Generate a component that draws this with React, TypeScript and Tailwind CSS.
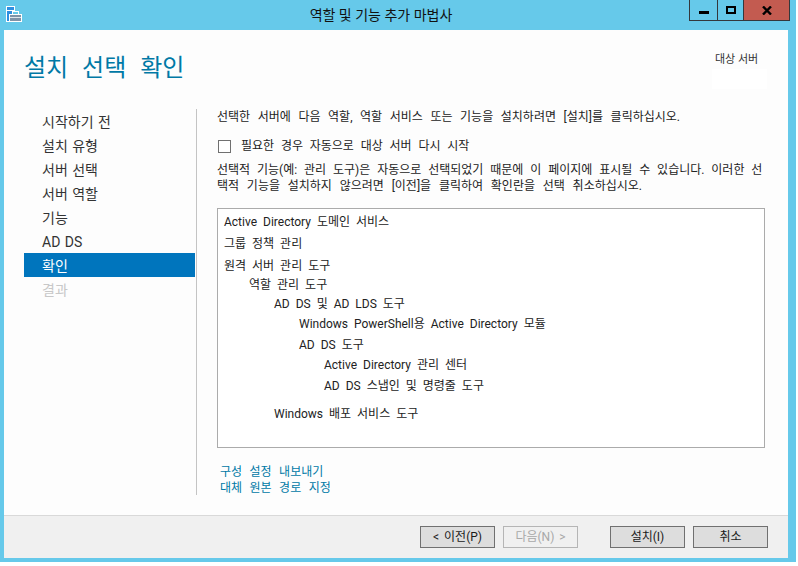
const steps = [
  { label: "시작하기 전" },
  { label: "설치 유형" },
  { label: "서버 선택" },
  { label: "서버 역할" },
  { label: "기능" },
  { label: "AD DS" },
  { label: "확인", active: true },
  { label: "결과", disabled: true },
];

const WizardIcon = () => (
  <svg width="16" height="16" viewBox="0 0 16 16" shapeRendering="crispEdges">
    <rect x="0.5" y="0.5" width="8" height="15" fill="#2f8fe0" stroke="#fff" />
    <rect x="1" y="4" width="7" height="1" fill="#fff" />
    <rect x="3.5" y="8.5" width="12" height="7" fill="#7f93a8" stroke="#fff" />
    <rect x="6.5" y="5.5" width="6" height="3" fill="#66c9ea" stroke="#fff" />
    <rect x="4" y="11" width="11" height="1" fill="#dfe6ec" />
  </svg>
);

const FooterButton = ({ label, disabled, className }: { label: string; disabled?: boolean; className?: string }) => (
  <button
    className={`h-[22px] w-[75px] border text-[12px] leading-[18px] [word-spacing:2px] ${
      disabled ? "border-[#b5b5b5] bg-[#f0f0f0] text-[#a8a8a8]" : "border-[#707070] bg-[#dddddd] text-[#1a1a1a]"
    } ${className ?? ""}`}
  >
    {label}
  </button>
);

const TreeRow = ({ text, level, className }: { text: string; level: 0 | 1 | 2 | 3 | 4; className: string }) => {
  const indent = ["pl-0", "pl-[25px]", "pl-[50px]", "pl-[75px]", "pl-[100px]"][level];
  return <div className={`${indent} ${className}`}>{text}</div>;
};

export default function App() {
  return (
    <div className="h-[566px] w-[798px] bg-white font-['Roboto','Noto_Sans_CJK_KR',sans-serif] text-[12px] text-[#222]">
      <div className="flex h-[562px] w-[796px] flex-col bg-[#66c9ea] pb-[4px] pl-[4px] pr-[8px]">
        <div className="relative flex h-[30px] shrink-0 items-center justify-center -ml-[4px] -mr-[8px] pr-[34px]">
          <div className="absolute left-[6px] top-[6px]">
            <WizardIcon />
          </div>
          <span className="text-[14px] text-[#111]">역할 및 기능 추가 마법사</span>
          <div className="absolute right-[6px] top-0 flex h-[21px] border border-t-0 border-[#34383c]">
            <div className="flex w-[27px] items-end justify-center pb-[6px]">
              <div className="h-[3px] w-[10px] bg-black" />
            </div>
            <div className="flex w-[26px] items-center justify-center border-l border-[#34383c]">
              <div className="h-[8px] w-[10px] border-2 border-black" />
            </div>
            <div className="flex w-[46px] items-center justify-center border-l border-[#34383c] bg-[#c35b50]">
              <svg width="10" height="9" viewBox="0 0 10 9">
                <path d="M1 0.5 L9 8.5 M9 0.5 L1 8.5" stroke="#000" strokeWidth="2.4" />
              </svg>
            </div>
          </div>
        </div>

        <div className="flex min-h-0 flex-1 flex-col bg-[#fdfdfd]">
          <div className="flex h-[79px] shrink-0 justify-between pr-[21px]">
            <h1 className="pl-[20px] pt-[20px] text-[24px] leading-[36px] text-[#0079a6] [word-spacing:8px]">설치 선택 확인</h1>
            <div className="flex w-[55px] flex-col items-start pt-[22px]">
              <span className="pl-[3px] text-[11px] leading-[16px] text-[#333]">대상 서버</span>
              <div className="mt-[1px] h-[20px] w-[55px] bg-white" />
            </div>
          </div>

          <div className="flex min-h-0 flex-1">
            <nav className="h-[386px] w-[193px] shrink-0 border-r border-[#c4c4c4] pl-[20px] pr-[1px]">
              {steps.map((step) => (
                <div
                  key={step.label}
                  className={`flex h-[24px] items-center pl-[18px] pt-[2px] text-[14px] [word-spacing:1px] ${
                    step.active ? "bg-[#0075bd] text-white" : step.disabled ? "text-[#c8c8c8]" : "text-[#333]"
                  }`}
                >
                  {step.label}
                </div>
              ))}
            </nav>

            <div className="flex min-w-0 flex-1 flex-col pl-[20px] pr-[23px] leading-[16px]">
              <p className="whitespace-nowrap [word-spacing:4.6px]">
                선택한 서버에 다음 역할, 역할 서비스 또는 기능을 설치하려면 [설치]를 클릭하십시오.
              </p>
              <label className="mt-[13px] flex h-[16px] items-center gap-[10px] pl-[1px] [word-spacing:3.8px]">
                <span className="h-[13px] w-[13px] border border-[#707070] bg-white" />
                <span>필요한 경우 자동으로 대상 서버 다시 시작</span>
              </label>
              <div className="mt-[8px] whitespace-nowrap">
                <p className="[word-spacing:3.9px]">
                  선택적 기능(예: 관리 도구)은 자동으로 선택되었기 때문에 이 페이지에 표시될 수 있습니다. 이러한 선
                </p>
                <p className="[word-spacing:4.8px]">
                  택적 기능을 설치하지 않으려면 [이전]을 클릭하여 확인란을 선택 취소하십시오.
                </p>
              </div>
              <div className="mt-[14px] h-[240px] border border-[#ababab] bg-white pl-[6px] pt-[4px] leading-[18px] [word-spacing:3px]">
                <TreeRow level={0} text="Active Directory 도메인 서비스" className="h-[22px]" />
                <TreeRow level={0} text="그룹 정책 관리" className="h-[22px]" />
                <TreeRow level={0} text="원격 서버 관리 도구" className="h-[19px]" />
                <TreeRow level={1} text="역할 관리 도구" className="h-[19px]" />
                <TreeRow level={2} text="AD DS 및 AD LDS 도구" className="h-[20px]" />
                <TreeRow level={3} text="Windows PowerShell용 Active Directory 모듈" className="h-[21px]" />
                <TreeRow level={3} text="AD DS 도구" className="h-[20px]" />
                <TreeRow level={4} text="Active Directory 관리 센터" className="h-[21px]" />
                <TreeRow level={4} text="AD DS 스냅인 및 명령줄 도구" className="h-[28px]" />
                <TreeRow level={2} text="Windows 배포 서비스 도구" className="h-[20px]" />
              </div>
              <div className="mt-[16px] flex flex-col pl-[3px] text-[#0079a6] [word-spacing:4.5px]">
                <a className="h-[16px]">구성 설정 내보내기</a>
                <a className="h-[16px]">대체 원본 경로 지정</a>
              </div>
            </div>
          </div>

          <div className="flex h-[43px] shrink-0 items-start border-t border-[#d9d9d9] bg-[#f0f0f0] pl-[416px] pt-[10px]">
            <FooterButton label="< 이전(P)" />
            <FooterButton label="다음(N) >" disabled className="ml-[8px]" />
            <FooterButton label="설치(I)" className="ml-[32px]" />
            <FooterButton label="취소" className="ml-[8px]" />
          </div>
        </div>
      </div>
    </div>
  );
}
